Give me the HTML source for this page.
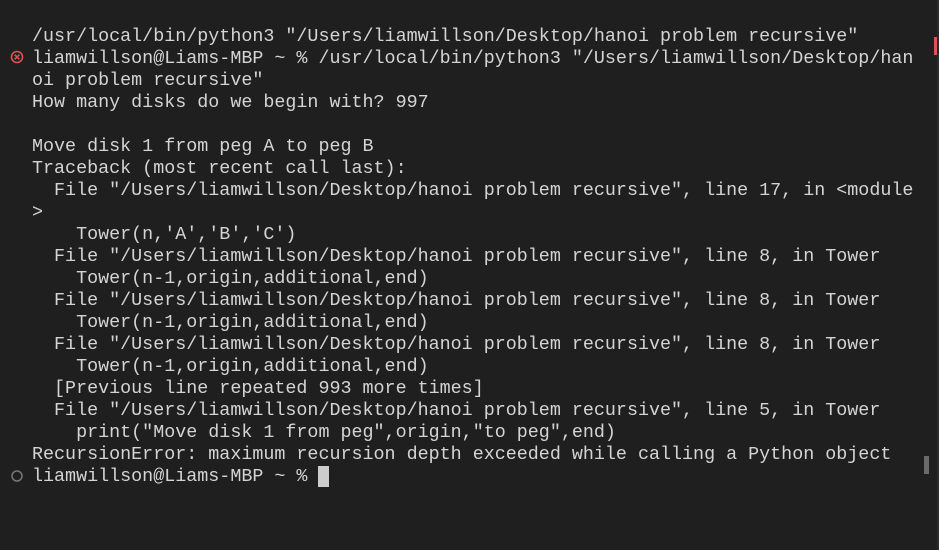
<!DOCTYPE html>
<html><head><meta charset="utf-8"><style>
html,body{margin:0;padding:0;width:939px;height:550px;background:#1f1f1f;overflow:hidden}
pre{position:absolute;left:32px;top:26px;margin:0;font-family:"Liberation Mono",monospace;font-size:18.38px;line-height:22px;color:#d4d4d4;white-space:pre}
.ic{position:absolute;font-family:"DejaVu Sans",sans-serif}
</style></head><body>
<pre>/usr/local/bin/python3 "/Users/liamwillson/Desktop/hanoi problem recursive"
liamwillson@Liams-MBP ~ % /usr/local/bin/python3 "/Users/liamwillson/Desktop/han
oi problem recursive"
How many disks do we begin with? 997

Move disk 1 from peg A to peg B
Traceback (most recent call last):
  File "/Users/liamwillson/Desktop/hanoi problem recursive", line 17, in &lt;module
&gt;
    Tower(n,'A','B','C')
  File "/Users/liamwillson/Desktop/hanoi problem recursive", line 8, in Tower
    Tower(n-1,origin,additional,end)
  File "/Users/liamwillson/Desktop/hanoi problem recursive", line 8, in Tower
    Tower(n-1,origin,additional,end)
  File "/Users/liamwillson/Desktop/hanoi problem recursive", line 8, in Tower
    Tower(n-1,origin,additional,end)
  [Previous line repeated 993 more times]
  File "/Users/liamwillson/Desktop/hanoi problem recursive", line 5, in Tower
    print("Move disk 1 from peg",origin,"to peg",end)
RecursionError: maximum recursion depth exceeded while calling a Python object
liamwillson@Liams-MBP ~ % <span style="background:#cccccc"> </span></pre>
<svg class="ic" style="left:10px;top:50px" width="14" height="14" viewBox="0 0 14 14"><circle cx="7" cy="7" r="5.5" fill="none" stroke="#e05252" stroke-width="1.6"/><path d="M4.7 4.7L9.3 9.3M9.3 4.7L4.7 9.3" stroke="#e05252" stroke-width="1.6"/></svg>
<svg class="ic" style="left:10px;top:469px" width="14" height="14" viewBox="0 0 14 14"><circle cx="7" cy="7" r="5" fill="none" stroke="#777" stroke-width="1.5"/></svg>
<div style="position:absolute;left:934px;top:37px;width:5px;height:18px;background:#e05252"></div>
<div style="position:absolute;left:924px;top:456px;width:5px;height:18px;background:#6a6a6a"></div>
<div style="position:absolute;left:937px;top:0;width:2px;height:550px;background:#2b2b2b"></div>
</body></html>
